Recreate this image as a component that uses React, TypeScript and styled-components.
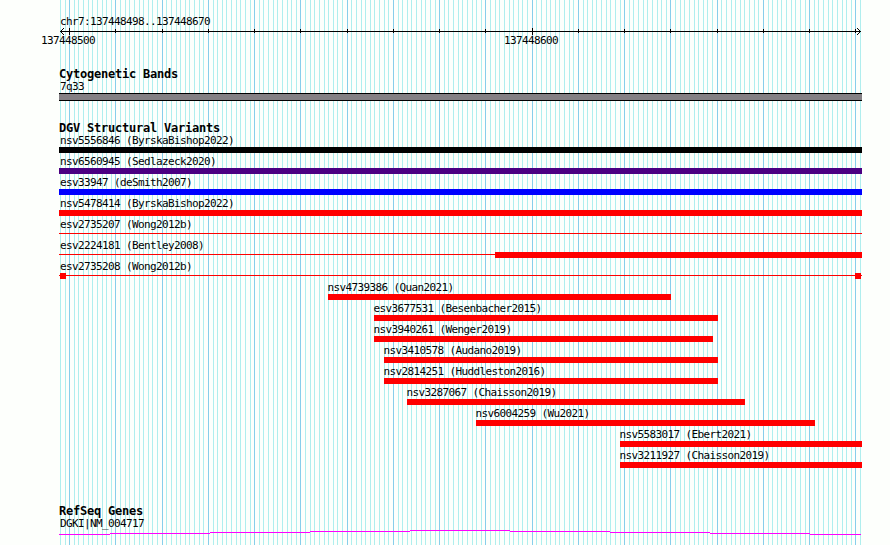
import React from "react";
import styled, { createGlobalStyle } from "styled-components";

const REGION_START = 137448498;
const REGION_END = 137448670;
const PANEL_LEFT = 59;
const PANEL_WIDTH = 803;
const IMAGE_WIDTH = 890;
const IMAGE_HEIGHT = 545;
const PX_PER_BASE = 800 / (REGION_END - REGION_START + 1);

const RED = "#ff0000";

const GlobalStyle = createGlobalStyle`
  body {
    margin: 0;
    background: #fdfffc;
    overflow: hidden;
  }
`;

const Browser = styled.main`
  position: relative;
  width: ${IMAGE_WIDTH}px;
  height: ${IMAGE_HEIGHT}px;
  overflow: hidden;
  color: #000;
  font-family: "DejaVu Sans Mono", monospace;
`;

const GridLines = styled.svg`
  position: absolute;
  inset: 0;
`;

const Panel = styled.div`
  position: relative;
  width: ${PANEL_WIDTH}px;
  padding: 15px 0 0 ${PANEL_LEFT}px;
`;

const Label = styled.div<{ $indent?: number }>`
  height: 12px;
  padding-left: ${({ $indent = 1 }) => $indent}px;
  font-size: 11px;
  line-height: 14px;
  letter-spacing: -0.622px;
  white-space: pre;
`;

const Ruler = styled.div`
  height: 53px;
`;

const Axis = styled.svg`
  display: block;
`;

const AxisNumbers = styled.div`
  display: flex;
  gap: 408px;
  margin: -1px 0 0 -19px;
`;

const Track = styled.section<{ $height: number }>`
  height: ${({ $height }) => $height}px;
`;

const TrackTitle = styled.h2`
  height: 12px;
  margin: 0;
  font-size: 12px;
  font-weight: bold;
  line-height: 12px;
  letter-spacing: -0.224px;
  white-space: pre;
`;

const Band = styled.div`
  height: 6px;
  margin-top: 1px;
  border: solid #000;
  border-width: 1px 0;
  background: #848084;
`;

const Row = styled.div`
  height: 21px;
`;

const Lane = styled.div<{ $connected?: boolean }>`
  display: flex;
  height: 6px;
  margin-top: 1px;
  background: ${({ $connected }) =>
    $connected
      ? `linear-gradient(${RED}, ${RED}) 0 2px / 100% 1px no-repeat`
      : "none"};
`;

const Segment = styled.div<{ $gap: number; $width: number; $color: string }>`
  flex: none;
  width: ${({ $width }) => $width}px;
  height: 6px;
  margin-left: ${({ $gap }) => $gap}px;
  background: ${({ $color }) => $color};
`;

type Variant = {
  name: string;
  // pixel spans, [start, end)
  spans: [number, number][];
  color?: string;
  connected?: boolean;
};

const VARIANTS: Variant[] = [
  { name: "nsv5556846 (ByrskaBishop2022)", spans: [[59, 862]], color: "#000" },
  { name: "nsv6560945 (Sedlazeck2020)", spans: [[59, 862]], color: "#4b0082" },
  { name: "esv33947 (deSmith2007)", spans: [[59, 862]], color: "#0000ff" },
  { name: "nsv5478414 (ByrskaBishop2022)", spans: [[59, 862]] },
  { name: "esv2735207 (Wong2012b)", spans: [], connected: true },
  { name: "esv2224181 (Bentley2008)", spans: [[495, 862]], connected: true },
  {
    name: "esv2735208 (Wong2012b)",
    spans: [[60, 66], [855, 861]],
    connected: true,
  },
  { name: "nsv4739386 (Quan2021)", spans: [[328, 671]] },
  { name: "esv3677531 (Besenbacher2015)", spans: [[374, 718]] },
  { name: "nsv3940261 (Wenger2019)", spans: [[374, 713]] },
  { name: "nsv3410578 (Audano2019)", spans: [[384, 718]] },
  { name: "nsv2814251 (Huddleston2016)", spans: [[384, 718]] },
  { name: "nsv3287067 (Chaisson2019)", spans: [[407, 745]] },
  { name: "nsv6004259 (Wu2021)", spans: [[476, 815]] },
  { name: "nsv5583017 (Ebert2021)", spans: [[620, 862]] },
  { name: "nsv3211927 (Chaisson2019)", spans: [[620, 862]] },
];

const baseToX = (base: number) =>
  60 + Math.round((base - REGION_START) * PX_PER_BASE);

const BASES = Array.from(
  { length: REGION_END - REGION_START + 2 },
  (_, i) => REGION_START + i,
);

function Grid() {
  return (
    <GridLines
      height={IMAGE_HEIGHT}
      shapeRendering="crispEdges"
      width={IMAGE_WIDTH}
    >
      {BASES.map((base) => (
        <rect
          fill={base % 10 === 0 ? "#87ceeb" : "#afeeee"}
          height={IMAGE_HEIGHT}
          key={base}
          width={1}
          x={baseToX(base)}
          y={0}
        />
      ))}
    </GridLines>
  );
}

function Scale() {
  return (
    <Axis height={8} shapeRendering="crispEdges" width={PANEL_WIDTH}>
      <rect height={1} width={801} x={1} y={4} />
      {BASES.filter((base) => base % 10 === 0).map((base) => {
        const major = base % 100 === 0;
        return (
          <rect
            height={major ? 7 : 4}
            key={base}
            width={1}
            x={baseToX(base) - PANEL_LEFT}
            y={major ? 1 : 2}
          />
        );
      })}
      {/* arrow heads */}
      {[1, 2, 3].map((d) => (
        <React.Fragment key={d}>
          <rect height={1} width={1} x={1 + d} y={4 - d} />
          <rect height={1} width={1} x={1 + d} y={4 + d} />
          <rect height={1} width={1} x={801 - d} y={4 - d} />
          <rect height={1} width={1} x={801 - d} y={4 + d} />
        </React.Fragment>
      ))}
    </Axis>
  );
}

function VariantRow({ variant }: { variant: Variant }) {
  const { color = RED, connected, name, spans } = variant;
  // connected variants start left of the visible region
  const labelStart = connected ? PANEL_LEFT : spans[0][0];
  const indent =
    labelStart === PANEL_LEFT ? 1 : labelStart - PANEL_LEFT - 0.5;

  return (
    <Row>
      <Label $indent={indent}>{name}</Label>
      <Lane $connected={connected}>
        {spans.map(([start, end], i) => (
          <Segment
            $color={color}
            $gap={start - (i === 0 ? PANEL_LEFT : spans[i - 1][1])}
            $width={end - start}
            key={start}
          />
        ))}
      </Lane>
    </Row>
  );
}

function GeneLine() {
  return (
    <svg
      display="block"
      height={8}
      shapeRendering="crispEdges"
      width={PANEL_WIDTH}
    >
      <g fill="#ff00ff">
        <rect height={1} width={51} x={0} y={5} />
        {[4, 3, 2, 1, 2, 3, 4].map((y, i) => (
          <rect height={1} key={i} width={100} x={51 + i * 100} y={y} />
        ))}
        <rect height={1} width={51} x={751} y={5} />
      </g>
    </svg>
  );
}

export default function App() {
  return (
    <Browser>
      <GlobalStyle />
      <Grid />
      <Panel>
        <Ruler>
          <Label>chr7:137448498..137448670</Label>
          <Scale />
          <AxisNumbers>
            <Label>137448500</Label>
            <Label>137448600</Label>
          </AxisNumbers>
        </Ruler>
        <Track $height={54}>
          <TrackTitle>Cytogenetic Bands</TrackTitle>
          <Label>7q33</Label>
          <Band />
        </Track>
        <Track $height={383}>
          <TrackTitle>DGV Structural Variants</TrackTitle>
          {VARIANTS.map((variant) => (
            <VariantRow key={variant.name} variant={variant} />
          ))}
        </Track>
        <Track $height={40}>
          <TrackTitle>RefSeq Genes</TrackTitle>
          <Label>DGKI|NM_004717</Label>
          <GeneLine />
        </Track>
      </Panel>
    </Browser>
  );
}
